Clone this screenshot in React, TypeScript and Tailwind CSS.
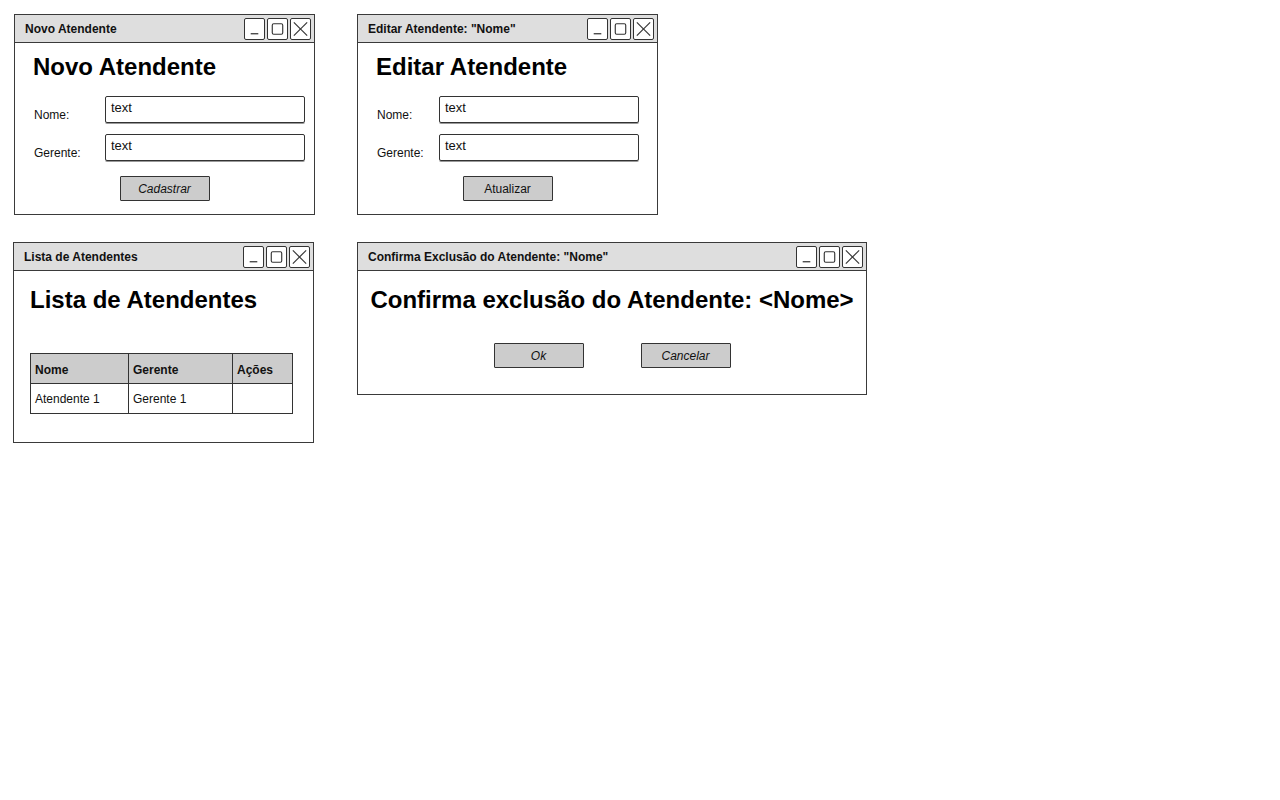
import React from "react";

const TitleButtons: React.FC = () => (
    <div className="flex gap-[2px] pr-[3px]">
        <div className="h-[22px] w-[21px] rounded-[2px] border border-[#333] bg-white">
            <svg viewBox="0 0 20 20" className="h-full w-full" fill="none" stroke="#333" strokeWidth="1.3">
                <line x1="6" y1="15" x2="14" y2="15" />
            </svg>
        </div>
        <div className="h-[22px] w-[21px] rounded-[2px] border border-[#333] bg-white">
            <svg viewBox="0 0 20 20" className="h-full w-full" fill="none" stroke="#333" strokeWidth="1.2">
                <rect x="4.5" y="4.5" width="11" height="11" rx="1.5" />
            </svg>
        </div>
        <div className="h-[22px] w-[21px] rounded-[2px] border border-[#333] bg-white">
            <svg viewBox="0 0 20 20" className="h-full w-full" fill="none" stroke="#333" strokeWidth="1.2">
                <line x1="3" y1="3" x2="17" y2="17" />
                <line x1="17" y1="3" x2="3" y2="17" />
            </svg>
        </div>
    </div>
);

interface WindowProps {
    title: string;
    className: string;
    children: React.ReactNode;
}

const Window: React.FC<WindowProps> = ({ title, className, children }) => (
    <div className={`flex flex-col border border-[#3a3a3a] bg-white ${className}`}>
        <div className="flex h-[28px] shrink-0 items-center justify-between border-b border-[#3a3a3a] bg-[#dedede] pl-[10px]">
            <span className="text-[12px] leading-[14px] font-bold text-[#111]">{title}</span>
            <TitleButtons />
        </div>
        {children}
    </div>
);

const Field: React.FC<{ label: string; labelWidth: string }> = ({ label, labelWidth }) => (
    <div className="flex items-start">
        <div className={`${labelWidth} pl-[1px] pt-[11px] text-[12px] leading-[16px] text-[#111]`}>{label}</div>
        <div className="h-[27px] w-[200px] rounded-[2px] border border-[#333] px-[5px] pt-[3px] text-[13px] leading-[16px] text-[#111] shadow-[0_1px_0_#999]">
            text
        </div>
    </div>
);

const Button: React.FC<{ label: string; italic?: boolean }> = ({ label, italic }) => (
    <div
        className={`flex h-[25px] w-[90px] items-center justify-center rounded-[1px] border border-[#333] bg-[#cccccc] text-[12px] text-[#111] ${italic ? "italic" : ""}`}
    >
        {label}
    </div>
);

const FormWindow: React.FC<{ title: string; heading: string; labelWidth: string; button: string; italic?: boolean }> = ({
    title,
    heading,
    labelWidth,
    button,
    italic,
}) => (
    <Window title={title} className="h-[201px] w-[301px]">
        <div className="flex flex-col pl-[18px] pt-[12px]">
            <h1 className="text-[24px] leading-[24px] font-bold text-black">{heading}</h1>
            <div className="mt-[17px] flex flex-col gap-[11px]">
                <Field label="Nome:" labelWidth={labelWidth} />
                <Field label="Gerente:" labelWidth={labelWidth} />
            </div>
        </div>
        <div className="mt-[15px] flex justify-center">
            <Button label={button} italic={italic} />
        </div>
    </Window>
);

export default function App() {
    return (
        <div className="min-h-[800px] bg-white pl-[14px] pt-[14px] font-['Liberation_Sans',Arial,sans-serif]">
            <div className="flex gap-[42px]">
                <FormWindow title="Novo Atendente" heading="Novo Atendente" labelWidth="w-[72px]" button="Cadastrar" italic />
                <FormWindow title='Editar Atendente: "Nome"' heading="Editar Atendente" labelWidth="w-[63px]" button="Atualizar" />
            </div>

            <div className="mt-[27px] -ml-px flex items-start gap-[43px]">
                <Window title="Lista de Atendentes" className="h-[201px] w-[301px]">
                    <div className="flex flex-col pl-[16px] pt-[17px]">
                        <h1 className="text-[24px] leading-[24px] font-bold text-black">Lista de Atendentes</h1>
                        <table className="mt-[41px] w-[263px] border-collapse text-[12px] text-[#111]">
                            <thead>
                                <tr className="h-[30px] bg-[#cccccc] text-left">
                                    <th className="w-[98px] border border-[#333] pl-[4px] pt-[3px] font-bold">Nome</th>
                                    <th className="w-[104px] border border-[#333] pl-[4px] pt-[3px] font-bold">Gerente</th>
                                    <th className="border border-[#333] pl-[4px] pt-[3px] font-bold">Ações</th>
                                </tr>
                            </thead>
                            <tbody>
                                <tr className="h-[30px]">
                                    <td className="border border-[#333] pl-[4px]">Atendente 1</td>
                                    <td className="border border-[#333] pl-[4px]">Gerente 1</td>
                                    <td className="border border-[#333]" />
                                </tr>
                            </tbody>
                        </table>
                    </div>
                </Window>

                <Window title='Confirma Exclusão do Atendente: "Nome"' className="h-[153px] w-[510px]">
                    <div className="flex flex-col items-center pt-[17px]">
                        <h1 className="text-[24px] leading-[24px] font-bold text-black">Confirma exclusão do Atendente: &lt;Nome&gt;</h1>
                        <div className="mt-[31px] flex gap-[57px]">
                            <Button label="Ok" italic />
                            <Button label="Cancelar" italic />
                        </div>
                    </div>
                </Window>
            </div>
        </div>
    );
}
